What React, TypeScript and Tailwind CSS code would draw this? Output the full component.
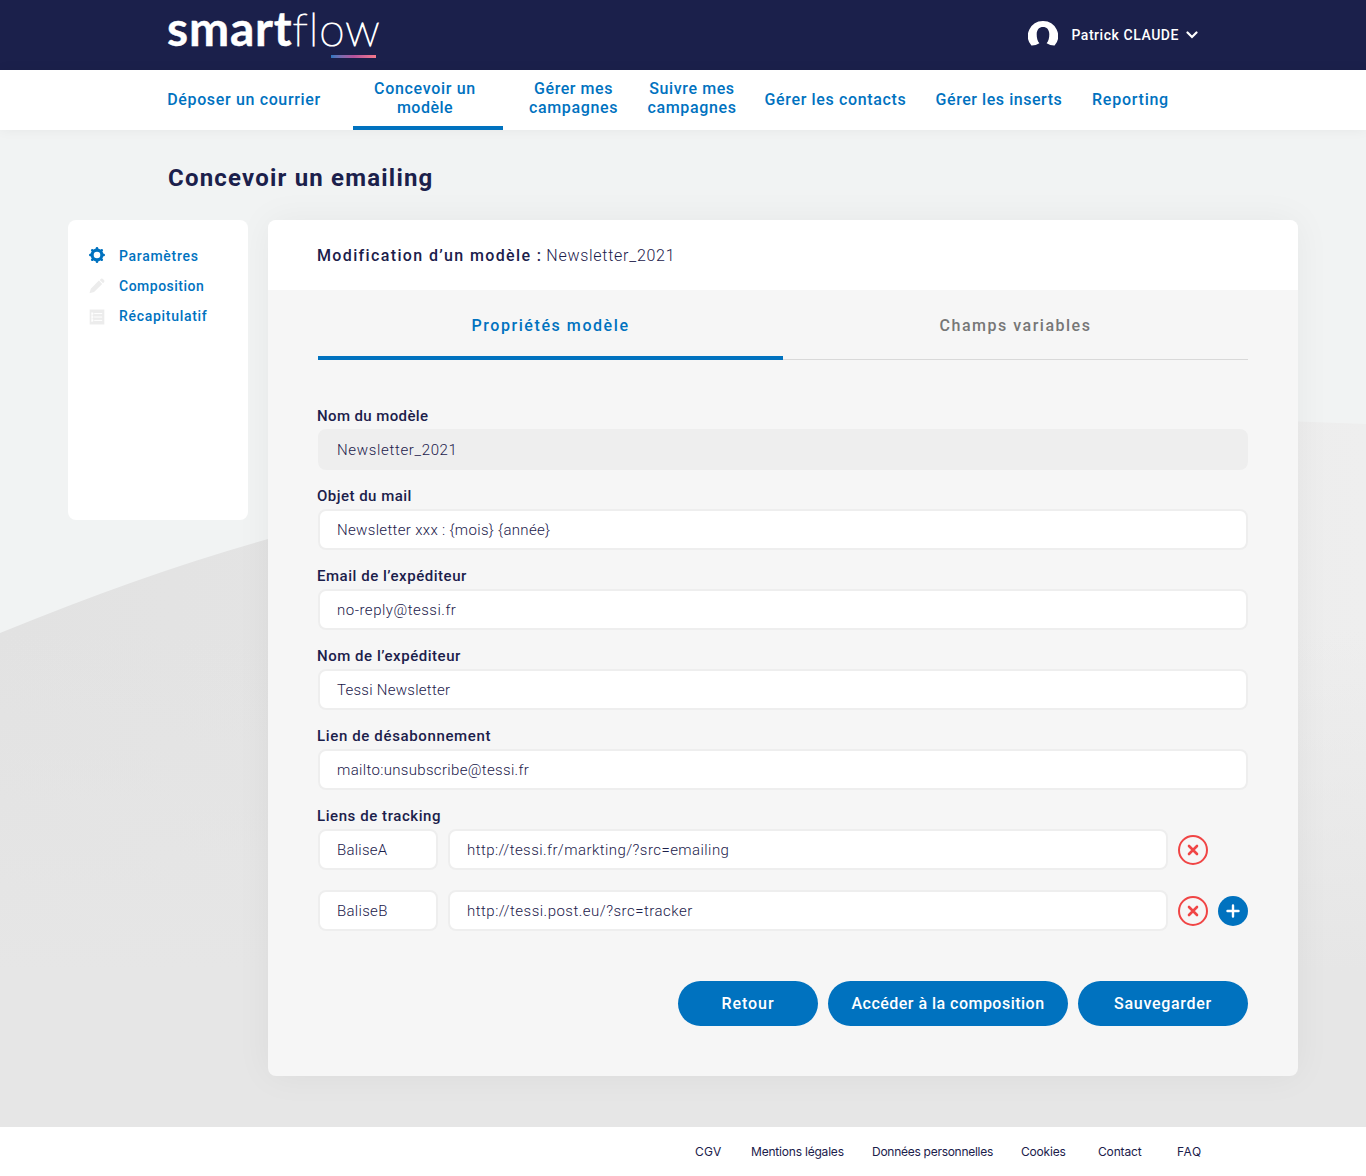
import React from "react";

type Text = { label: string; tracking: string };

const navItems: { lines: Text[]; box: string; active?: boolean }[] = [
  { lines: [{ label: "Déposer un courrier", tracking: "tracking-[0.65px]" }], box: "w-[184px] pt-1.5" },
  {
    lines: [
      { label: "Concevoir un", tracking: "tracking-[0.68px]" },
      { label: "modèle", tracking: "tracking-[0.5px]" },
    ],
    box: "ml-[17px] w-[150px] pt-1 pr-[6px]",
    active: true,
  },
  {
    lines: [
      { label: "Gérer mes", tracking: "tracking-[0.55px]" },
      { label: "campagnes", tracking: "tracking-[0.65px]" },
    ],
    box: "ml-[11px] w-[119px] pt-1",
  },
  {
    lines: [
      { label: "Suivre mes", tracking: "tracking-[0.6px]" },
      { label: "campagnes", tracking: "tracking-[0.65px]" },
    ],
    box: "w-[118px] pt-1",
  },
  { lines: [{ label: "Gérer les contacts", tracking: "tracking-[0.65px]" }], box: "w-[169px] pt-1.5" },
  { lines: [{ label: "Gérer les inserts", tracking: "tracking-[0.55px]" }], box: "w-[158px] pt-1.5" },
  { lines: [{ label: "Reporting", tracking: "tracking-[0.75px]" }], box: "w-[105px] pt-1.5" },
];

const fields = [
  { label: "Nom du modèle", lt: "tracking-[0.39px]", value: "Newsletter_2021", vt: "tracking-[0.66px]", disabled: true },
  { label: "Objet du mail", lt: "tracking-[0.48px]", value: "Newsletter xxx : {mois} {année}", vt: "tracking-[0.33px]" },
  { label: "Email de l’expéditeur", lt: "tracking-[0.53px]", value: "no-reply@tessi.fr", vt: "tracking-[0.5px]" },
  { label: "Nom de l’expéditeur", lt: "tracking-[0.54px]", value: "Tessi Newsletter", vt: "tracking-[0.26px]" },
  { label: "Lien de désabonnement", lt: "tracking-[0.64px]", value: "mailto:unsubscribe@tessi.fr", vt: "tracking-[0.33px]" },
];

const links = [
  { tag: "BaliseA", tt: "tracking-[0.25px]", url: "http://tessi.fr/markting/?src=emailing", ut: "tracking-[0.43px]" },
  { tag: "BaliseB", tt: "tracking-[0.3px]", url: "http://tessi.post.eu/?src=tracker", ut: "tracking-[0.48px]" },
];

const footerLinks = [
  { label: "CGV", cls: "w-[56px] tracking-[0.3px]" },
  { label: "Mentions légales", cls: "w-[121px] tracking-[-0.2px]" },
  { label: "Données personnelles", cls: "w-[149px] tracking-[-0.27px]" },
  { label: "Cookies", cls: "w-[77px] tracking-[-0.19px]" },
  { label: "Contact", cls: "w-[79px] tracking-[-0.15px]" },
  { label: "FAQ", cls: "w-[30px] tracking-[0.6px]" },
];

function GearIcon() {
  return (
    <svg viewBox="0 0 16 16" className="size-4" fill="none" stroke="#0072bf">
      <circle cx="8" cy="8" r="4.9" strokeWidth="3.2" />
      {[0, 45, 90, 135, 180, 225, 270, 315].map((a) => (
        <path key={a} d="M8 2.6V1.3" strokeWidth="2.6" strokeLinecap="round" transform={`rotate(${a} 8 8)`} />
      ))}
    </svg>
  );
}

function PencilIcon() {
  return (
    <svg viewBox="0 0 16 16" className="size-4" fill="#ececec">
      <path d="M.4 15.2 1.8 10.7 9.900 2.600 13.200 5.900 5.100 14Z" />
      <path d="M10.700 1.900 12 .700Q12.800.100 13.600.800L15.100 2.300Q15.800 3.100 15.200 3.900L14 5.200Z" />
    </svg>
  );
}

function ListIcon() {
  return (
    <svg viewBox="0 0 16 16" className="size-4">
      <path d="M.7.5h14.6v15H.7z" fill="#ececec" />
      <path d="M3 3.4v9.5M5.2 4.6h8M5.2 8h8M5.2 11.4h8" stroke="#fff" strokeWidth="1" />
      <path d="M2.6 4.6h1.8M2.6 8h1.8M2.6 11.4h1.8" stroke="#fff" strokeWidth="1.6" />
    </svg>
  );
}

const steps = [
  { label: "Paramètres", tracking: "tracking-[0.7px]", icon: <GearIcon />, shift: "-mt-[3px]" },
  { label: "Composition", tracking: "tracking-[0.5px]", icon: <PencilIcon />, shift: "" },
  { label: "Récapitulatif", tracking: "tracking-[0.7px]", icon: <ListIcon />, shift: "mt-[2px]" },
];

function Box({ children, className }: { children: React.ReactNode; className: string }) {
  return (
    <div className={`flex h-[41px] items-center rounded-lg border-2 border-[#eeeeee] pt-px pl-[17px] text-[15px] leading-5 [font-weight:350] ${className}`}>
      {children}
    </div>
  );
}

function RemoveButton() {
  return (
    <button className="ml-2.5 flex size-[30px] items-center justify-center rounded-full border-2 border-[#f04545]">
      <svg viewBox="0 0 12 12" className="size-3">
        <path d="m2 2 8 8m0-8-8 8" stroke="#f04545" strokeWidth="2.6" strokeLinecap="round" />
      </svg>
    </button>
  );
}

function Backdrop() {
  return (
    <svg className="absolute inset-0 -z-10 h-full w-full" viewBox="0 130 1366 997" preserveAspectRatio="none">
      <defs>
        <linearGradient id="across" x1="0" x2="1" y1="0" y2="0">
          <stop offset="0" stopColor="#e2e2e2" />
          <stop offset="0.25" stopColor="#e4e4e4" />
          <stop offset="1" stopColor="#eeeeee" />
        </linearGradient>
        <linearGradient id="down" x1="0" x2="0" y1="0" y2="1">
          <stop offset="0.3" stopColor="#e6e6e6" stopOpacity="0" />
          <stop offset="0.78" stopColor="#e6e6e6" />
        </linearGradient>
      </defs>
      <path d="M0 633Q146 573 268 539Q850 395 1298 421.500L1366 424V1127H0Z" fill="url(#across)" />
      <path d="M0 633Q146 573 268 539Q850 395 1298 421.500L1366 424V1127H0Z" fill="url(#down)" />
    </svg>
  );
}

export default function App() {
  return (
    <div className="flex h-[1176px] w-[1366px] flex-col overflow-hidden bg-white font-[Roboto,'Liberation_Sans',sans-serif] text-[#1b204b]">
      <header className="flex h-[70px] shrink-0 items-start justify-between bg-[#1b204b] pr-[168px] pl-[167px] text-white">
        <div className="relative flex h-[70px] items-baseline font-[Lato,sans-serif] leading-[56px]">
          <span className="text-[48px] font-bold tracking-[0.8px] [-webkit-text-stroke:0.4px_white] [font-variant-ligatures:none]">smart</span>
          <span className="text-[46px] font-thin tracking-[1px] [-webkit-text-stroke:1.2px_white] [font-variant-ligatures:none]">flow</span>
          <span className="absolute top-[55px] left-[164px] h-[3px] w-[45px] bg-linear-to-r from-[#2777c0] via-[#b4529c] to-[#f5798a]" />
        </div>
        <div className="flex h-[70px] items-center">
          <svg viewBox="0 0 30 26" className="-mt-[3px] h-[26px] w-[30px]" fill="#fff">
            <path d="M15 0A15 15 0 0 1 26.600 24.600Q22.500 24.800 18.600 22.200C20.600 20 21.300 16.500 21.300 13.200C21.300 8.600 18.700 6 15 6S8.700 8.600 8.700 13.200C8.700 16.500 9.400 20 11.400 22.200Q7.500 24.800 3.400 24.600A15 15 0 0 1 15 0Z" />
          </svg>
          <span className="ml-[13px] text-sm font-medium tracking-[0.55px]">Patrick CLAUDE</span>
          <svg viewBox="0 0 12 8" className="ml-[7px] h-2 w-3" fill="none">
            <path d="m1.500 1.500 4.500 4.500 4.500-4.500" stroke="#fff" strokeWidth="2.200" strokeLinecap="round" />
          </svg>
        </div>
      </header>

      <nav className="relative z-10 flex h-[60px] shrink-0 bg-white pl-[152px] text-[16px] leading-[19px] font-medium text-[#0072bf] shadow-[0_0_12px_rgba(0,0,0,0.05)]">
        {navItems.map((item, i) => (
          <a
            key={i}
            className={`flex flex-col items-center justify-center border-b-4 pb-1 whitespace-nowrap ${item.box} ${
              item.active ? "border-[#0072bf]" : "border-transparent"
            }`}
          >
            {item.lines.map((line) => (
              <span key={line.label} className={line.tracking}>
                {line.label}
              </span>
            ))}
          </a>
        ))}
      </nav>

      <main className="relative isolate h-[997px] shrink-0 bg-[#f1f3f3] px-[68px] pt-[33px]">
        <Backdrop />
        <h1 className="ml-[100px] text-2xl leading-[30px] font-bold tracking-[1.2px]">Concevoir un emailing</h1>
        <div className="mt-[27px] flex items-start gap-5">
          <aside className="relative z-10 h-[300px] w-[180px] rounded-lg bg-white pt-[21px] pl-[21px]">
            {steps.map((step) => (
              <a key={step.label} className="flex h-[30px] items-center gap-3.5 text-sm font-medium text-[#0072bf]">
                <span className={step.shift}>{step.icon}</span>
                <span className={step.tracking}>{step.label}</span>
              </a>
            ))}
          </aside>

          <section className="h-[856px] w-[1030px] overflow-hidden rounded-lg bg-[#f6f6f6] shadow-[0_0_36px_rgba(0,0,0,0.05)]">
            <div className="flex h-[70px] items-center bg-white pt-0.5 pl-[49px] text-[16px]">
              <h2 className="font-medium tracking-[1.36px]">Modification d’un modèle :</h2>
              <span className="ml-1 [font-weight:350] tracking-[0.73px]">Newsletter_2021</span>
            </div>

            <div className="px-[50px]">
              <div className="grid h-[70px] grid-cols-2 text-center text-[16px] leading-6 font-medium">
                <div className="border-b-4 border-[#0072bf] pt-6 tracking-[1.57px] text-[#0072bf]">Propriétés modèle</div>
                <div className="border-b border-[#d9d9d9] pt-6 tracking-[1.5px] text-[#777777]">Champs variables</div>
              </div>

              <div className="flex flex-col gap-4 pt-[46px]">
                {fields.map((f) => (
                  <div key={f.label}>
                    <div className={`-ml-px mb-[3px] text-[15px] leading-5 font-medium ${f.lt}`}>{f.label}</div>
                    <Box className={`${f.vt} ${f.disabled ? "bg-[#eeeeee]" : "bg-white"}`}>{f.value}</Box>
                  </div>
                ))}
                <div>
                  <div className="-ml-px mb-[3px] text-[15px] leading-5 font-medium tracking-[0.57px]">Liens de tracking</div>
                  <div className="flex flex-col gap-5">
                    {links.map((l, i) => (
                      <div key={l.tag} className="flex items-center">
                        <Box className={`w-[120px] bg-white ${l.tt}`}>{l.tag}</Box>
                        <Box className={`ml-2.5 w-[720px] bg-white ${l.ut}`}>{l.url}</Box>
                        <RemoveButton />
                        {i === 1 && (
                          <button className="ml-2.5 flex size-[30px] items-center justify-center rounded-full bg-[#0072bf]">
                            <svg viewBox="0 0 14 14" className="size-3.5">
                              <path d="M7 1.500v11M1.500 7h11" stroke="#fff" strokeWidth="2.400" strokeLinecap="round" />
                            </svg>
                          </button>
                        )}
                      </div>
                    ))}
                  </div>
                </div>
              </div>

              <div className="mt-[50px] flex h-[45px] justify-end gap-2.5 text-[16px] font-medium text-white">
                <button className="w-[140px] rounded-full bg-[#0072bf] tracking-[0.95px]">Retour</button>
                <button className="w-[240px] rounded-full bg-[#0072bf] tracking-[0.48px]">Accéder à la composition</button>
                <button className="w-[170px] rounded-full bg-[#0072bf] tracking-[0.7px]">Sauvegarder</button>
              </div>
            </div>
          </section>
        </div>
      </main>

      <footer className="flex h-[49px] shrink-0 items-center pl-[695px] font-[Inter,sans-serif] text-xs whitespace-nowrap">
        {footerLinks.map((l) => (
          <a key={l.label} className={l.cls}>
            {l.label}
          </a>
        ))}
      </footer>
    </div>
  );
}
